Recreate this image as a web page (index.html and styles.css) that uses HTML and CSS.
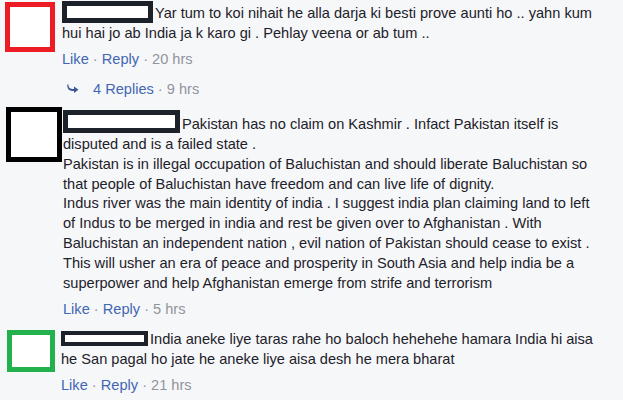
FILE: index.html
```html
<!DOCTYPE html>
<html lang="en">
<head>
    <meta charset="UTF-8">
    <title>Comments</title>
    <link rel="stylesheet" href="styles.css">
</head>
<body>
    <div class="thread">

        <div class="comment first">
            <div class="avatar red"></div>
            <div class="body">
                <p class="text"><span class="name red"></span>Yar tum to koi nihait he alla darja ki besti prove aunti ho .. yahn kum hui hai jo ab India ja k karo gi . Pehlay veena or ab tum ..</p>
                <div class="actions"><a href="#">Like</a> · <a href="#">Reply</a> · 20 hrs</div>
                <div class="replies">
                    <svg width="12" height="9" viewBox="0 0 12 9">
                        <path d="M1.5 0.5 C1.5 4 3 5 7 5 L7 2.5 L11.5 5.8 L7 9 L7 7 C2.5 7 0 5.5 0.3 0.5 Z" fill="#3b5998"/>
                    </svg>
                    <a href="#">4 Replies</a> · 9 hrs
                </div>
            </div>
        </div>

        <div class="comment second">
            <div class="avatar black"></div>
            <div class="body">
                <p class="text"><span class="name black"></span>Pakistan has no claim on Kashmir . Infact Pakistan itself is disputed and is a failed state .<br>Pakistan is in illegal occupation of Baluchistan and should liberate Baluchistan so that people of Baluchistan have freedom and can live life of dignity.<br>Indus river was the main identity of india . I suggest india plan claiming land to left of Indus to be merged in india and rest be given over to Afghanistan . With Baluchistan an independent nation , evil nation of Pakistan should cease to exist . This will usher an era of peace and prosperity in South Asia and help india be a superpower and help Afghanistan emerge from strife and terrorism</p>
                <div class="actions"><a href="#">Like</a> · <a href="#">Reply</a> · 5 hrs</div>
            </div>
        </div>

        <div class="comment third">
            <div class="avatar green"></div>
            <div class="body">
                <p class="text"><span class="name green"></span>India aneke liye taras rahe ho baloch hehehehe hamara India hi aisa he San pagal ho jate he aneke liye aisa desh he mera bharat</p>
                <div class="actions"><a href="#">Like</a> · <a href="#">Reply</a> · 21 hrs</div>
            </div>
        </div>

    </div>
</body>
</html>
```

FILE: styles.css
```css
body {
    margin: 0;
    background: #f6f7f9;
    font-family: "Liberation Sans", Arial, sans-serif;
    font-size: 14.6px;
    color: #1d2129;
}

.thread {
    padding: 2px 22px 0 5px;
}

.comment {
    display: grid;
    grid-template-columns: 57px 1fr;
    align-items: start;
}

.avatar {
    background: #fff;
    border: 5px solid;
    box-sizing: border-box;
}

.red { border-color: #ed1c24; }
.black { border-color: #000; }
.green { border-color: #22b14c; }

.text {
    margin: 0;
    line-height: 19.9px;
}

.name {
    display: inline-block;
    background: #fff;
    border: 5px solid;
    box-sizing: border-box;
    margin-right: 2px;
    margin-top: -8px;
}

.actions {
    margin-top: 5px;
    line-height: 20px;
    color: #90949c;
}

.actions a, .replies a {
    color: #4267b2;
    text-decoration: none;
}

.replies {
    margin-top: 10px;
    padding-left: 5px;
    line-height: 20px;
    color: #90949c;
    display: flex;
    align-items: center;
    gap: 4px;
}

.replies svg {
    margin-right: 10px;
}

/* first comment */
.first .avatar {
    width: 50px;
    height: 50px;
}

.first .body {
    padding-top: 2px;
}

.first .name {
    width: 91px;
    height: 22px;
    vertical-align: -5px;
}

/* second comment */
.second {
    margin-top: 8px;
}

.second .avatar {
    width: 56px;
    height: 55px;
    margin-left: 1px;
}

.second .body {
    padding: 8px 0 0 1px;
}

.second .name {
    width: 117px;
    height: 23px;
    vertical-align: -4px;
}

/* third comment */
.third {
    margin-top: 11px;
}

.third .avatar {
    width: 48px;
    height: 42px;
    margin-left: 2px;
}

.third .body {
    margin-left: -1px;
}

.third .name {
    width: 87px;
    height: 15px;
    border-width: 4px;
    vertical-align: -2px;
}
```
